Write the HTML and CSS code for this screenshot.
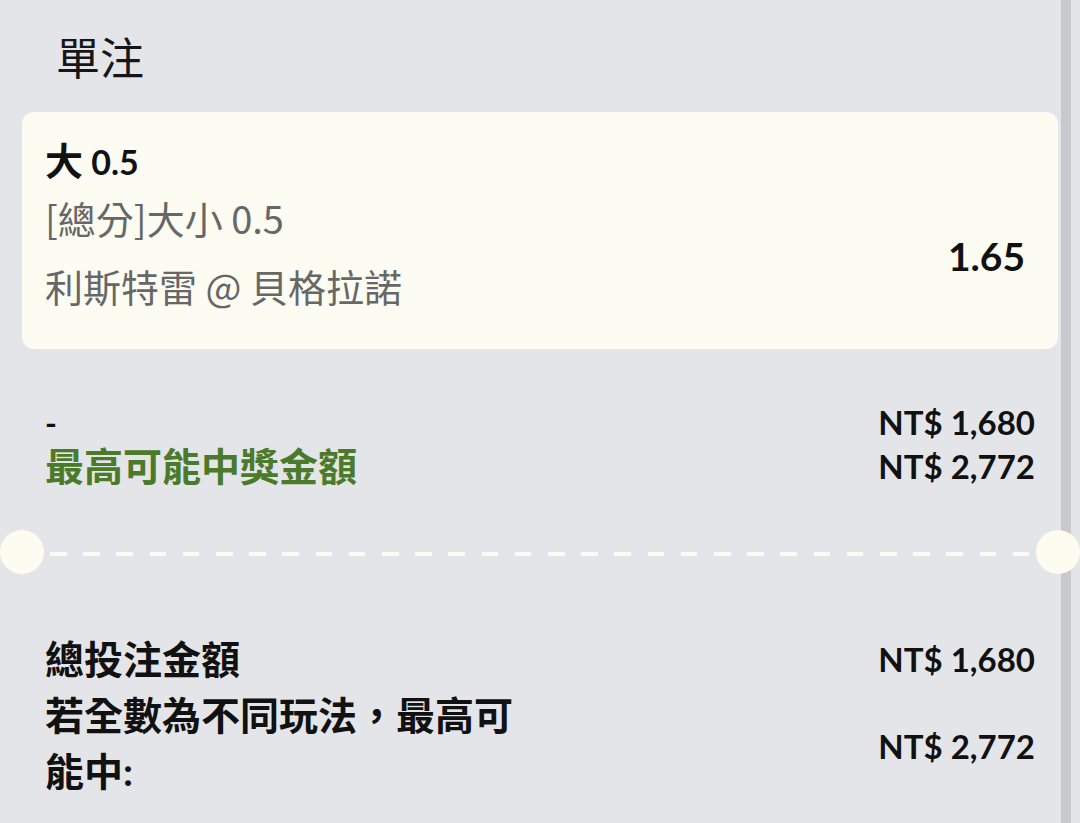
FILE: index.html
```html
<!DOCTYPE html>
<html lang="zh-Hant">
<head>
    <meta charset="UTF-8">
    <meta name="viewport" content="width=device-width, initial-scale=1.0">
    <title>單注</title>
    <link rel="stylesheet" href="styles.css">
</head>
<body>
    <div class="slip">
        <h2 class="slip-title">單注</h2>

        <div class="bet-card">
            <div class="bet-pick"><span class="zh">大</span> 0.5</div>
            <div class="bet-row">
                <div class="bet-info">
                    <div class="bet-market">[總分]大小 0.5</div>
                    <div class="bet-event">利斯特雷 @ 貝格拉諾</div>
                </div>
                <div class="bet-odds">1.65</div>
            </div>
        </div>

        <div class="stake">
            <div class="line">
                <span class="stake-input">-</span>
                <span class="amount">NT$ 1,680</span>
            </div>
            <div class="line">
                <span class="label win">最高可能中獎金額</span>
                <span class="amount">NT$ 2,772</span>
            </div>
        </div>

        <div class="divider">
            <span class="notch"></span>
            <span class="dashes"></span>
            <span class="notch"></span>
        </div>

        <div class="summary">
            <div class="line">
                <span class="label">總投注金額</span>
                <span class="amount">NT$ 1,680</span>
            </div>
            <div class="line">
                <span class="label">若全數為不同玩法，最高可能中:</span>
                <span class="amount total-win">NT$ 2,772</span>
            </div>
        </div>
    </div>
    <div class="scrollbar"></div>
</body>
</html>
```

FILE: styles.css
```css
body {
    margin: 0;
    background-color: #e4e5e8;
    font-family: Lato, "Noto Sans CJK TC", sans-serif;
    color: #111;
}
.slip-title {
    margin: 0;
    padding: 26px 0 0 56px;
    font-family: "Noto Sans CJK TC", sans-serif;
    font-weight: 400;
    font-size: 44px;
    line-height: 60px;
    color: #161616;
}
.bet-card {
    margin: 26px 22px 0;
    padding: 26px 33px 29px 23px;
    background-color: #fcfcf3;
    border-radius: 12px;
}
.bet-pick {
    font-weight: bold;
    font-size: 34px;
    line-height: 44px;
}
.bet-pick .zh {
    font-size: 38px;
}
.bet-row {
    display: flex;
    justify-content: space-between;
    align-items: center;
}
.bet-market,
.bet-event {
    font-family: "Noto Sans CJK TC", sans-serif;
    font-size: 38px;
    line-height: 68px;
    color: #676767;
}
.bet-odds {
    padding-top: 8px;
    font-weight: bold;
    font-size: 39px;
}
.stake {
    margin-top: 51px;
    padding: 0 45px;
}
.line {
    display: flex;
    justify-content: space-between;
    align-items: center;
}
.stake .line {
    height: 44px;
}
.stake-input {
    font-weight: bold;
    font-size: 32px;
}
.label {
    font-weight: bold;
    font-size: 39px;
    line-height: 44px;
}
.win {
    color: #4b7a2b;
}
.amount {
    font-weight: bold;
    font-size: 33px;
}
.total-win {
    padding-top: 6px;
}
.divider {
    display: flex;
    align-items: center;
    margin-top: 42px;
}
.notch {
    position: relative;
    z-index: 2;
    width: 44px;
    height: 44px;
    border-radius: 50%;
    background-color: #fcfcf0;
}
.dashes {
    flex: 1;
    height: 4px;
    margin: 4px 6px 0;
    background: repeating-linear-gradient(to right, #fbfbf1 0 16.6px, transparent 16.6px 33.2px);
}
.summary {
    margin-top: 57px;
    padding: 0 45px;
}
.summary .label {
    max-width: 495px;
    line-height: 56px;
}
.scrollbar {
    position: fixed;
    top: 0;
    right: 9px;
    z-index: 1;
    width: 10px;
    height: 100%;
    background-color: #c8c9cc;
}
```
